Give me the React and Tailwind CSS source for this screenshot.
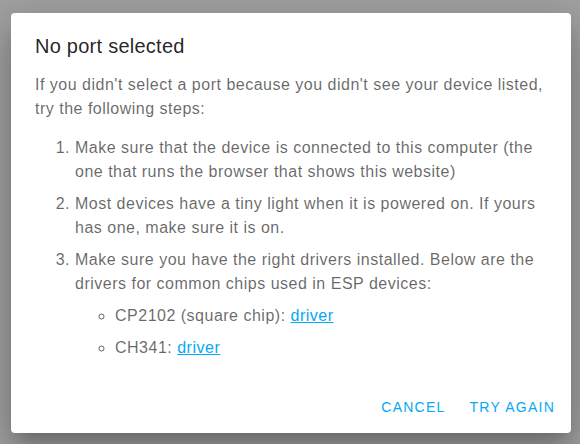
import React from "react";

const App = () => {
  return (
    <div className="w-[580px] h-[444px] bg-[#a1a1a1] flex items-center justify-center pl-[2px] pt-[2px] font-['Liberation_Sans',Arial,sans-serif]">
      {/* Dialog */}
      <div className="w-[560px] h-[420px] bg-white rounded flex flex-col shadow-[0_11px_15px_-7px_rgba(0,0,0,0.2),0_24px_38px_3px_rgba(0,0,0,0.14),0_9px_46px_8px_rgba(0,0,0,0.12)]">
        <h2 className="px-6 pt-[17px] text-[20px] leading-[32px] tracking-[0.25px] text-[rgba(0,0,0,0.87)]">
          No port selected
        </h2>
        <div className="px-6 pt-[11px] flex-1 text-[16px] leading-6 tracking-[0.5px] text-[rgba(0,0,0,0.6)]">
          <p>
            If you didn't select a port because you didn't see your device listed,
            try the following steps:
          </p>
          <ol className="list-decimal pl-10 mt-[15px] space-y-2">
            <li>
              Make sure that the device is connected to this computer (the one that
              runs the browser that shows this website)
            </li>
            <li>
              Most devices have a tiny light when it is powered on. If yours has
              one, make sure it is on.
            </li>
            <li>
              Make sure you have the right drivers installed. Below are the drivers
              for common chips used in ESP devices:
              <ul className="list-[circle] pl-10 mt-2 space-y-2">
                <li>
                  CP2102 (square chip):{" "}
                  <a href="#" className="text-[#03a9f4] underline">driver</a>
                </li>
                <li>
                  CH341: <a href="#" className="text-[#03a9f4] underline">driver</a>
                </li>
              </ul>
            </li>
          </ol>
        </div>
        <div className="flex justify-end gap-2 p-2">
          <button className="h-9 px-2 text-[14px] font-medium tracking-[1.25px] text-[#03a9f4] uppercase">
            Cancel
          </button>
          <button className="h-9 px-2 text-[14px] font-medium tracking-[1.25px] text-[#03a9f4] uppercase">
            Try again
          </button>
        </div>
      </div>
    </div>
  );
};

export default App;
